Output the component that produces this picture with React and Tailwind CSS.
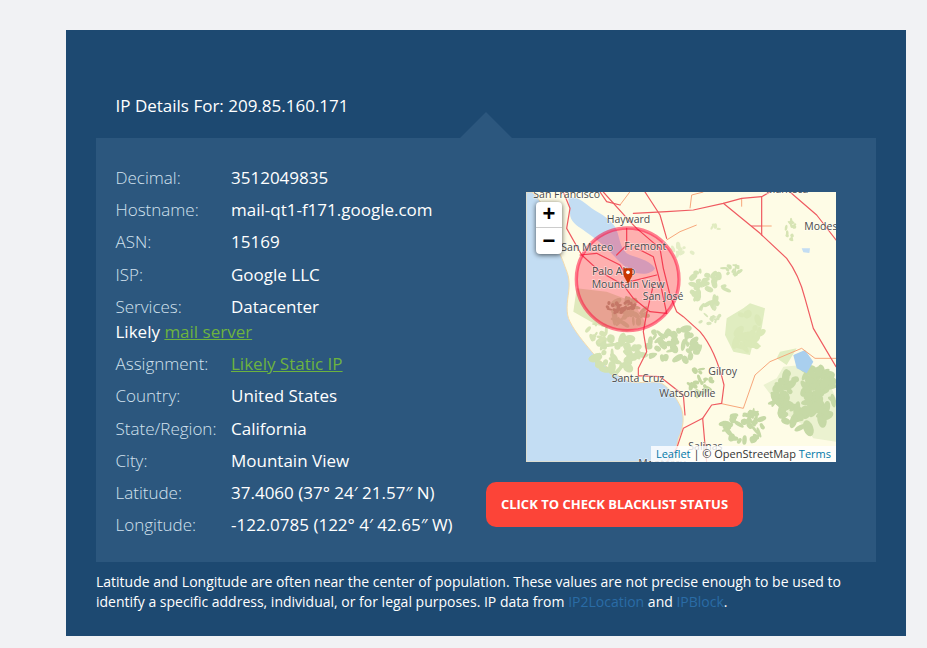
const rows1 = [
  ["Decimal:", "3512049835"],
  ["Hostname:", "mail-qt1-f171.google.com"],
  ["ASN:", "15169"],
  ["ISP:", "Google LLC"],
  ["Services:", "Datacenter"],
];
const rows2 = [
  ["Country:", "United States"],
  ["State/Region:", "California"],
  ["City:", "Mountain View"],
  ["Latitude:", "37.4060 (37° 24′ 21.57″ N)"],
  ["Longitude:", "-122.0785 (122° 4′ 42.65″ W)"],
];

function Row({ label, children }) {
  return (
    <div className="flex h-[32.25px] items-center">
      <span className="w-[115.5px] shrink-0 font-light text-[#d3e2ee]">{label}</span>
      <span className="text-white">{children}</span>
    </div>
  );
}

let seed = 1234567;
function rnd() {
  seed = (seed + 0x6d2b79f5) | 0;
  let t = Math.imul(seed ^ (seed >>> 15), 1 | seed);
  t = (t + Math.imul(t ^ (t >>> 7), 61 | t)) ^ t;
  return ((t ^ (t >>> 14)) >>> 0) / 4294967296;
}
// [cx, cy, rx, ry, count, maxBlob, colour]
const regions = [
  [560, 310, 65, 60, 34, 14, "#d3e3b4"],
  [640, 250, 28, 22, 14, 10, "#d3e3b4"],
  [460, 480, 85, 55, 46, 16, "#c9dbaa"],
  [290, 510, 80, 55, 40, 18, "#d2e2b2"],
  [565, 390, 35, 30, 14, 9, "#d7e5ba"],
  [540, 590, 35, 40, 22, 12, "#c4d7a2"],
  [860, 640, 95, 95, 90, 22, "#c6d9a6"],
  [670, 725, 65, 45, 38, 15, "#c6d9a6"],
  [815, 135, 18, 30, 14, 8, "#d7e4b4"],
  [490, 195, 35, 20, 12, 10, "#e4edc6"],
  [240, 440, 40, 30, 14, 12, "#d7e4b4"],
  [680, 440, 45, 55, 22, 22, "#dbe9b8"],
  [590, 125, 25, 8, 6, 8, "#e1ecc0"],
  [320, 380, 60, 40, 30, 14, "#c2d49e"],
  [300, 365, 40, 22, 22, 10, "#adab7e"],
];
const blobs = regions.flatMap(([cx, cy, rx, ry, n, m, fill]) =>
  Array.from({ length: n }, () => {
    const a = rnd() * Math.PI * 2;
    const r = Math.sqrt(rnd());
    return {
      x: cx + Math.cos(a) * r * rx,
      y: cy + Math.sin(a) * r * ry,
      rx: m * (0.4 + rnd() * 0.8),
      ry: m * (0.25 + rnd() * 0.45),
      rot: rnd() * 180,
      fill,
    };
  })
);

function MapArt() {
  const road = { fill: "none", stroke: "#ef5a60", strokeWidth: 3.6, strokeLinejoin: "round", strokeLinecap: "round" };
  const minor = { fill: "none", stroke: "#f7a77b", strokeWidth: 3, strokeLinejoin: "round" };
  const labels = [
    ["San Francisco", 40, 38],
    ["Hayward", 260, 114],
    ["San Mateo", 124, 199],
    ["Fremont", 313, 196],
    ["Palo Alto", 216, 270],
    ["Mountain View", 215, 308],
    ["San José", 368, 345],
    ["Santa Cruz", 275, 590],
    ["Watsonville", 418, 635],
    ["Gilroy", 565, 570],
    ["Salinas", 505, 794],
    ["Modesto", 853, 134],
    ["Manteca", 738, 24],
    ["Monterey", 355, 845],
  ];
  return (
    <svg viewBox="18 21 930 810" className="block h-[270px] w-[310px]" xmlns="http://www.w3.org/2000/svg">
      <defs>
        <filter id="soft" x="-5%" y="-5%" width="110%" height="110%"><feGaussianBlur stdDeviation="1.6" /></filter>
      </defs>
      <rect x="18" y="21" width="930" height="810" fill="#fefce6" />
      <path d="M18 21 L36 21 C55 40 70 60 78 85 C88 120 100 150 108 175 C115 200 125 215 135 245 C145 270 150 285 146 320 C142 350 136 385 150 410 C165 440 190 470 215 500 C240 530 290 575 330 590 C360 598 400 585 425 595 C450 610 470 640 482 665 C495 695 490 730 475 760 L460 831 L18 831 Z" fill="#c3ddf3" stroke="#f4dcae" strokeWidth="3" />
      <g filter="url(#soft)">
        <path d="M145 40 C170 30 195 55 215 70 C235 85 265 95 285 125 C300 150 295 180 320 205 C345 220 385 220 405 250 C395 270 355 272 330 255 C305 240 285 215 265 195 C240 170 210 150 190 135 C170 122 150 110 150 85 Z" fill="#c3ddf3" />
        <path d="M620 400 L670 370 L690 355 L735 370 L725 430 L700 470 L690 510 L640 500 L615 450 Z" fill="#e0edc0" />
        <path d="M170 310 L260 320 L340 350 L380 420 L320 440 L230 420 L160 380 Z" fill="#dfe9bc" />
        <path d="M780 500 L830 490 L800 540 L770 520 Z" fill="#e0edc0" />
        <path d="M790 545 L845 540 L875 590 L930 600 L948 640 L948 770 L880 760 L850 720 L800 690 L760 640 L730 600 L770 580 Z" fill="#ebf2d0" />
        {blobs.map((b, i) => (
          <ellipse key={i} cx={b.x} cy={b.y} rx={b.rx} ry={b.ry} fill={b.fill} transform={`rotate(${b.rot} ${b.x} ${b.y})`} />
        ))}
        <path d="M820 510 L855 495 L880 530 L860 565 L830 550 Z" fill="#a9cfee" />
        <path d="M845 190 L870 190 L868 204 L850 202 Z" fill="#c3ddf3" />
      </g>
      <path d="M300 60 L330 20" {...minor} />
      <path d="M510 70 L515 30 L550 21" {...minor} />
      <path d="M440 165 L480 140 L530 120" {...minor} />
      <path d="M665 40 L665 65" {...minor} />
      <path d="M725 123 L755 123" {...minor} />
      <path d="M600 655 L670 670 L705 570 L750 530 L845 490 L885 520 L948 520" {...minor} />
      <path d="M610 55 L720 145 L800 220 C830 260 845 300 855 340 L880 430 L948 545" {...road} />
      <path d="M375 21 L420 90 L440 160" {...road} />
      <path d="M340 85 L440 80 L520 75 L610 55 L665 40 L725 35 L750 21" {...road} />
      <path d="M725 35 L725 150 M695 123 L725 123" {...road} />
      <path d="M810 21 L890 90 L948 165" {...road} />
      <path d="M250 21 L330 110 L350 130 L420 190 L430 250 L450 330 L470 380 L490 395 L540 440 C570 475 595 530 612 600 L605 655 L575 660 L548 700 L490 730 L470 790 L440 831" {...road} />
      <path d="M130 21 L150 70 L140 130 L185 210 L240 260 L310 300 L340 340 L390 380 L440 385" {...road} />
      <path d="M180 210 L230 205 L300 240 L330 290 L410 270 M320 130 L320 180 L290 210 M350 190 L400 215 L420 290 L440 385 M400 300 L380 385 L370 440 L380 500 L355 550 L355 575 M355 572 L420 575 L490 630 L495 690 M548 700 L555 780 L560 831" {...road} />
      <path d="M240 21 L260 50 L300 60" {...road} />
      <circle cx="323" cy="283" r="154" fill="#ff0033" fillOpacity="0.3" stroke="#ff0033" strokeOpacity="0.5" strokeWidth="10" />
      {labels.map(([t, x, y]) => (
        <text key={t} x={x} y={y} fontSize="31.5" fontFamily="'Open Sans', sans-serif" fontWeight="500" fill="#4b4b4b" stroke="#ffffff" strokeOpacity="0.5" strokeWidth="4" paintOrder="stroke">{t}</text>
      ))}
      <path d="M311 250 H337 V272 L324 296 L311 272 Z" fill="#c93500" />
      <circle cx="324" cy="262" r="5.5" fill="#ffffff" />
    </svg>
  );
}

export default function App() {
  return (
    <div className="min-h-[648px] bg-[#f1f2f4] pt-[30px] pl-[66px] pb-[12px] font-['Open_Sans',sans-serif]">
      <div className="h-[606px] w-[840px] bg-[#1d4971] px-[30px] pt-[64px]">
        <div className="h-[44px] pl-[19.5px] text-[17px] leading-[24px] text-white">IP Details For: 209.85.160.171</div>
        <div className="relative flex h-[424px] bg-[#2c577e] pl-[19.5px] pt-[23.6px] text-[17px]">
          <div className="absolute left-[364px] top-[-26px] h-0 w-0 border-x-[26px] border-b-[26px] border-x-transparent border-b-[#2c577e]" />
          <div className="w-[370.5px] shrink-0">
            {rows1.map(([l, v]) => <Row key={l} label={l}>{v}</Row>)}
            <div className="-mt-[3px] h-[28px] leading-[24px] text-white">
              Likely <a className="text-[#6db33f] underline">mail server</a>
            </div>
            <Row label="Assignment:"><a className="text-[#6db33f] underline">Likely Static IP</a></Row>
            {rows2.map(([l, v]) => <Row key={l} label={l}>{v}</Row>)}
          </div>
          <div className="flex flex-col items-start pt-[30.4px]">
            <div className="relative ml-[40px] h-[270px] w-[310px] overflow-hidden">
              <MapArt />
              <div className="absolute left-[10px] top-[10px] w-[26px] rounded-[4px] bg-white font-bold text-black shadow-[0_1px_5px_rgba(0,0,0,0.65)]">
                <div className="flex h-[26px] items-center justify-center border-b border-[#cccccc] font-['Liberation_Sans',sans-serif] text-[22px] leading-none">+</div>
                <div className="flex h-[26px] items-center justify-center font-['Liberation_Sans',sans-serif] text-[22px] leading-none">−</div>
              </div>
              <div className="absolute bottom-0 right-0 bg-white/80 px-[5px] text-[11px] leading-[16px] text-[#333333]">
                <a className="text-[#0078a8]">Leaflet</a> | © OpenStreetMap <a className="text-[#0078a8]">Terms</a>
              </div>
            </div>
            <button className="mt-[20px] h-[45px] w-[257px] rounded-[10px] bg-[#fc4438] text-[13px] font-bold uppercase text-white">Click to check blacklist status</button>
          </div>
        </div>
        <p className="pt-[10px] text-[14px] leading-[20px] text-white">
          Latitude and Longitude are often near the center of population. These values are not precise enough to be used to identify a specific address, individual, or for legal purposes. IP data from <a className="text-[#2a6ca6]">IP2Location</a> and <a className="text-[#2a6ca6]">IPBlock</a>.
        </p>
      </div>
    </div>
  );
}
